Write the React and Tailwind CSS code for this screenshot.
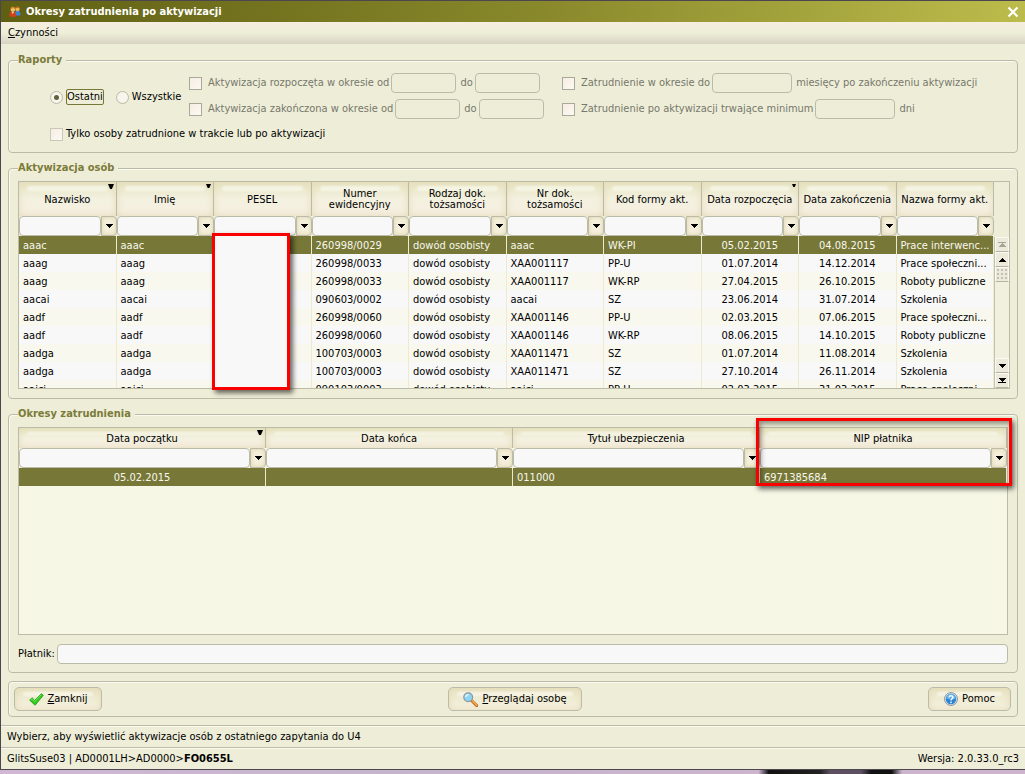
import React from 'react';
import clsx from 'clsx';

const PEOPLE_COLUMNS = [
  { title: 'Nazwisko', sort: 'w-1.5' },
  { title: 'Imię', sort: 'w-[5px]' },
  { title: 'PESEL' },
  { title: 'Numer ewidencyjny' },
  { title: 'Rodzaj dok. tożsamości' },
  { title: 'Nr dok. tożsamości' },
  { title: 'Kod formy akt.' },
  { title: 'Data rozpoczęcia', sort: 'w-1', center: true },
  { title: 'Data zakończenia', center: true },
  { title: 'Nazwa formy akt.' },
];

const PEOPLE = [
  ['aaac', 'aaac', '', '260998/0029', 'dowód osobisty', 'aaac', 'WK-PI', '05.02.2015', '04.08.2015', 'Prace interwenc...'],
  ['aaag', 'aaag', '', '260998/0033', 'dowód osobisty', 'XAA001117', 'PP-U', '01.07.2014', '14.12.2014', 'Prace społeczni...'],
  ['aaag', 'aaag', '', '260998/0033', 'dowód osobisty', 'XAA001117', 'WK-RP', '27.04.2015', '26.10.2015', 'Roboty publiczne'],
  ['aacai', 'aacai', '', '090603/0002', 'dowód osobisty', 'aacai', 'SZ', '23.06.2014', '31.07.2014', 'Szkolenia'],
  ['aadf', 'aadf', '', '260998/0060', 'dowód osobisty', 'XAA001146', 'PP-U', '02.03.2015', '07.06.2015', 'Prace społeczni...'],
  ['aadf', 'aadf', '', '260998/0060', 'dowód osobisty', 'XAA001146', 'WK-RP', '08.06.2015', '14.10.2015', 'Roboty publiczne'],
  ['aadga', 'aadga', '', '100703/0003', 'dowód osobisty', 'XAA011471', 'SZ', '01.07.2014', '11.08.2014', 'Szkolenia'],
  ['aadga', 'aadga', '', '100703/0003', 'dowód osobisty', 'XAA011471', 'SZ', '27.10.2014', '26.11.2014', 'Szkolenia'],
  ['aaici', 'aaici', '', '090103/0003', 'dowód osobisty', 'aaici', 'PP-U', '02.03.2015', '31.03.2015', 'Prace społeczni...'],
];

const PERIOD_COLUMNS = [
  { title: 'Data początku', sort: 'w-1.5', center: true },
  { title: 'Data końca', center: true },
  { title: 'Tytuł ubezpieczenia' },
  { title: 'NIP płatnika' },
];

const PERIODS = [['05.02.2015', '', '011000', '6971385684']];

const CHECKBOX = 'appearance-none size-[13px] shrink-0 border bg-linear-to-br from-[#f8ece2] to-[#fafaf4]';
const RADIO = 'appearance-none size-[13px] shrink-0 rounded-full border border-[#b9b9a6] bg-[#f7f5ec] grid place-items-center checked:before:size-[5px] checked:before:rounded-full checked:before:bg-[#62623a] checked:before:content-[""]';

function Triangle({ up, className }) {
  return (
    <svg className={className} width="8" height="4" viewBox="0 0 8 4" shapeRendering="crispEdges">
      <path d={up ? 'M0 4h8L4 0z' : 'M0 0h8L4 4z'} fill="currentColor" />
    </svg>
  );
}

function Group({ title, className, children }) {
  return (
    <fieldset className={clsx('min-w-0 rounded border border-[#bbbba8] pl-[9px] pt-1.5 shadow-[inset_1px_1px_0_#fafaf0]', className)}>
      <legend className="bg-[#eeeed8] pr-1 font-bold text-[#7b7b3a]">{title}</legend>
      {children}
    </fieldset>
  );
}

function DataGrid({ columns, rows, tall }) {
  return (
    <table className="w-full table-fixed border-separate border-spacing-0">
      <thead>
        <tr>
          {columns.map((col) => (
            <th
              key={col.title}
              className={clsx(
                'relative border-r border-[#bbbba8] bg-linear-to-b from-[#e6e4c0] via-[#f3f1e0] to-[#f6eee0] px-1 text-center font-normal leading-[11px] shadow-[inset_0_0_7px_#e4dab8]',
                tall ? 'h-[34px]' : 'h-5'
              )}
            >
              <span className={clsx('absolute inset-x-2 top-1 rounded bg-[#f8f7ea]/80 blur-[1px]', tall ? 'h-[5px]' : 'h-[3px]')} />
              <span className="relative">{col.title}</span>
              {col.sort && (
                <svg className={clsx('absolute right-0.5 top-0.5', col.sort)} viewBox="0 0 7 6">
                  <path d="M0 0h7L4.500 6h-2z" />
                </svg>
              )}
            </th>
          ))}
        </tr>
        <tr>
          {columns.map((col) => (
            <td key={col.title} className="h-5 p-0">
              <div className="flex h-5">
                <input
                  aria-label={`Filtr: ${col.title}`}
                  className="h-5 min-w-0 flex-1 rounded border border-[#bbbba8] bg-[#f8f8f8] px-1 outline-none"
                />
                <button
                  aria-label={`Wybierz: ${col.title}`}
                  className="grid h-5 w-4 place-items-center rounded-r border border-[#bbbba8] bg-[#f4efdc] shadow-[inset_0_0_4px_#ddd3a8]"
                >
                  <Triangle />
                </button>
              </div>
            </td>
          ))}
        </tr>
      </thead>
      <tbody>
        {rows.map((row, r) => (
          <tr
            key={r}
            className={clsx(r === 0 ? 'bg-[#777737] text-[#f8f8ee]' : r % 2 ? 'bg-[#f8f8f8]' : 'bg-[#f8f8ee]')}
          >
            {row.map((cell, c) => (
              <td
                key={c}
                className={clsx(
                  'h-[18px] whitespace-nowrap border-r border-[#ecebcf] pt-0.5 leading-4',
                  columns[c].center ? 'text-center' : 'pl-1'
                )}
              >
                {cell}
              </td>
            ))}
          </tr>
        ))}
      </tbody>
    </table>
  );
}

function ScrollButton({ label, disabled, children }) {
  return (
    <button
      aria-label={label}
      disabled={disabled}
      className="flex h-[15px] w-full flex-col items-center justify-center border border-[#fafaf2] border-b-[#b4b4a2] bg-[#eeeadb] disabled:text-[#a5a596]"
    >
      {children}
    </button>
  );
}

function ScrollBar() {
  return (
    <div className="flex w-[15px] shrink-0 flex-col pt-[55px]">
      <div className="flex flex-1 flex-col border-l border-[#c2c2b0] bg-[#f1f0de]">
        <ScrollButton label="Początek" disabled>
          <span className="h-px w-2 bg-current" />
          <Triangle up />
        </ScrollButton>
        <ScrollButton label="W górę"><Triangle up /></ScrollButton>
        <div className="h-[15px] border border-[#fafaf2] border-b-[#b4b4a2] bg-[#eeeadb] bg-[radial-gradient(#c2c2b0_1px,transparent_1px)] bg-[size:4px_4px]" />
        <div className="flex-1" />
        <ScrollButton label="W dół"><Triangle /></ScrollButton>
        <ScrollButton label="Koniec">
          <Triangle />
          <span className="h-px w-2 bg-current" />
        </ScrollButton>
      </div>
    </div>
  );
}

function RangeFilter({ label }) {
  return (
    <div className="flex items-center">
      <label className="flex items-center gap-1.5">
        <input type="checkbox" disabled className={clsx(CHECKBOX, 'border-[#a9a99a]')} />
        {label}
      </label>
      <input aria-label={`${label}: od`} disabled className="ml-0.5 h-5 w-[65px] rounded border border-[#bbbba8]" />
      <span className="ml-1">do</span>
      <input aria-label={`${label}: do`} disabled className="ml-0.5 h-5 w-[65px] rounded border border-[#bbbba8]" />
    </div>
  );
}

function NumberFilter({ label, unit }) {
  return (
    <div className="flex items-center">
      <label className="flex items-center gap-1.5">
        <input type="checkbox" disabled className={clsx(CHECKBOX, 'border-[#a9a99a]')} />
        {label}
      </label>
      <input aria-label={label} disabled className="ml-0.5 h-5 w-20 rounded border border-[#bbbba8]" />
      <span className="ml-1">{unit}</span>
    </div>
  );
}

function ActionButton({ className, children }) {
  return (
    <button
      className={clsx(
        'relative flex h-6 items-center justify-center gap-1 rounded-[5px] border border-[#bbbba8] bg-linear-to-b from-[#e8e5c4] to-[#f6f2e2] shadow-[inset_0_0_7px_#e4d8b4]',
        className
      )}
    >
      <span className="absolute inset-x-2 top-1 h-1 rounded bg-[#faf8ee]/80 blur-[1px]" />
      {children}
    </button>
  );
}

function PeopleIcon() {
  return (
    <svg width="12" height="11" viewBox="0 0 12 11">
      <path d="M5.500 9.500c0-3.500 1.200-5 3-5s3 1.500 3 5z" fill="#3d84d8" />
      <circle cx="8.500" cy="3" r="2.200" fill="#f0b458" />
      <path d="M6.400 2.400C6.600-.5 10.600-.5 10.700 2.800L9 1.600z" fill="#b4661a" />
      <path d="M.3 10.800c0-4 1-5.600 3.400-5.600s3.600 1.600 3.600 5.600z" fill="#d0401a" />
      <path d="M2.600 5.800l1.200 2.400 1.200-2.400z" fill="#f6d8a8" />
      <circle cx="3.900" cy="3.500" r="2.300" fill="#f5be68" />
      <path d="M1.600 3.300c-.2-3.600 4.700-3.600 4.700-.2L4 2z" fill="#d08428" />
    </svg>
  );
}

function CheckIcon() {
  return (
    <svg className="relative" width="15" height="13" viewBox="0 0 15 13">
      <path d="M.7 7.200 3 4.800l2.700 2.600L12.300.7l2 1.600-8.200 10z" fill="#2ecb1c" stroke="#1c9a12" strokeWidth=".8" strokeLinejoin="round" />
      <path d="M2 6.800l1-.9 2.700 2.700 6.500-6.700" fill="none" stroke="#86ee6c" strokeWidth=".8" />
    </svg>
  );
}

function SearchIcon() {
  return (
    <svg className="relative" width="15" height="15" viewBox="0 0 15 15">
      <path d="M9 9l4.800 4.600" stroke="#b56a24" strokeWidth="3" strokeLinecap="round" />
      <path d="M9.500 9.200l4.200 4" stroke="#f5a84c" strokeWidth="1.600" strokeLinecap="round" />
      <circle cx="5.200" cy="5.200" r="4.400" fill="#90d4f4" stroke="#8c98a0" strokeWidth="1.200" />
      <path d="M2.600 5c.2-1.600 1.400-2.500 3-2.400" stroke="#e8faff" strokeWidth="1.400" fill="none" />
    </svg>
  );
}

function HelpIcon() {
  return (
    <svg className="relative" width="14" height="14" viewBox="0 0 14 14">
      <circle cx="7" cy="7" r="6.500" fill="#d8dce0" stroke="#7c858e" strokeWidth=".8" />
      <circle cx="7" cy="7" r="5.200" fill="#2a84d4" />
      <path d="M2.200 6.500a4.800 4.800 0 0 1 9.600 0c-3 1.200-6.500 1.200-9.600 0z" fill="#62b2ee" />
      <path d="M5 5.400c.1-2.200 4-2.200 4 0C9 6.900 7 6.700 7 8.400" fill="none" stroke="#fff" strokeWidth="1.400" />
      <circle cx="7" cy="10.300" r=".9" fill="#fff" />
    </svg>
  );
}

export default function App() {
  return (
    <div className="flex min-h-screen flex-col bg-[#eeeed8] font-['DejaVu_Sans_Condensed','DejaVu_Sans',sans-serif] text-[11px] leading-[14px] text-black">
      <div className="flex flex-1 flex-col border-b border-l border-t border-[#4c4650]">
        <header className="flex h-[21px] items-center bg-linear-to-r from-[#606014] via-[#86862a] to-[#bcbc4c] pl-2 pr-1.5 text-white">
          <PeopleIcon />
          <h1 className="ml-[5px] flex-1 font-bold">Okresy zatrudnienia po aktywizacji</h1>
          <button aria-label="Zamknij okno">
            <svg width="12" height="12" viewBox="0 0 12 12">
              <path d="M1.500 1.500l9 9M10.500 1.500l-9 9" stroke="#fff" strokeWidth="2.200" />
            </svg>
          </button>
        </header>

        <nav className="flex h-[22px] items-center bg-linear-to-b from-[#f6eee0] via-[#eeeed8] to-[#d8d4c2] pl-[7px]">
          <button><u>C</u>zynności</button>
        </nav>

        <main className="flex flex-1 flex-col gap-2 px-[7px] pb-2 pt-[9px]">
          <Group title="Raporty" className="pb-[11px]">
            <div className="flex pl-8 text-[#77776c]">
              <div className="flex w-[139px] items-center gap-3 pt-0.5 text-black">
                <label className="flex items-center gap-[3px]">
                  <input type="radio" name="zakres" defaultChecked className={RADIO} />
                  <span className="rounded-xs border border-[#777737] leading-[14px]">Ostatni</span>
                </label>
                <label className="flex items-center gap-[3px]">
                  <input type="radio" name="zakres" className={RADIO} />
                  Wszystkie
                </label>
              </div>
              <div className="flex w-[373px] flex-col gap-1.5">
                <RangeFilter label="Aktywizacja rozpoczęta w okresie od" />
                <RangeFilter label="Aktywizacja zakończona w okresie od" />
              </div>
              <div className="flex flex-col gap-1.5">
                <NumberFilter label="Zatrudnienie w okresie do" unit="miesięcy po zakończeniu aktywizacji" />
                <NumberFilter label="Zatrudnienie po aktywizacji trwające minimum" unit="dni" />
              </div>
            </div>
            <label className="ml-8 mt-2 flex w-fit items-center gap-[3px]">
              <input type="checkbox" className={clsx(CHECKBOX, 'border-[#c8c8b8]')} />
              Tylko osoby zatrudnione w trakcie lub po aktywizacji
            </label>
          </Group>

          <Group title="Aktywizacja osób" className="pb-[9px] pr-[7px]">
            <div className="relative">
              <div className="flex h-[208px] overflow-hidden border border-[#bbbba8]">
                <div className="min-w-0 flex-1">
                  <DataGrid columns={PEOPLE_COLUMNS} rows={PEOPLE} tall />
                </div>
                <ScrollBar />
              </div>
              <div className="absolute left-[194px] top-[52px] h-[157px] w-[78px] border-3 border-[#fb0000] bg-[#f8f8f8] shadow-[3px_3px_5px_rgba(0,0,0,0.6)]" />
            </div>
          </Group>

          <Group title="Okresy zatrudnienia" className="flex-1 pb-2 pr-[9px]">
            <div className="relative">
              <div className="min-h-52 border border-[#bbbba8] bg-[#f7f7e6]">
                <DataGrid columns={PERIOD_COLUMNS} rows={PERIODS} />
              </div>
              <div className="absolute -right-1 -top-[9px] h-[68px] w-[256px] border-3 border-[#fb0000] shadow-[2px_3px_5px_rgba(0,0,0,0.6),inset_2px_3px_5px_rgba(0,0,0,0.4)]" />
            </div>
            <label className="mt-[9px] flex items-center gap-0.5">
              Płatnik:
              <input className="h-5 flex-1 rounded border border-[#bbbba8] bg-[#f8f8f8] px-1 outline-none" />
            </label>
          </Group>

          <div className="flex items-center justify-between rounded border border-[#bbbba8] py-[5px] pl-[5px] pr-1.5 shadow-[inset_1px_1px_0_#fafaf0]">
            <ActionButton className="w-[88px]">
              <CheckIcon />
              <span className="relative"><u>Z</u>amknij</span>
            </ActionButton>
            <ActionButton className="w-[134px]">
              <SearchIcon />
              <span className="relative"><u>P</u>rzeglądaj osobę</span>
            </ActionButton>
            <ActionButton className="w-[83px]">
              <HelpIcon />
              <span className="relative">Pomoc</span>
            </ActionButton>
          </div>
        </main>

        <div className="flex h-[22px] items-center border-t border-[#bbbba8] px-1.5 shadow-[inset_0_1px_0_#fafaf0]">
          Wybierz, aby wyświetlić aktywizacje osób z ostatniego zapytania do U4
        </div>
        <footer className="flex h-[22px] items-center justify-between border-t border-[#bbbba8] px-1.5 shadow-[inset_0_1px_0_#fafaf0]">
          <span>GlitsSuse03 | AD0001LH&gt;AD0000&gt;<b>FO0655L</b></span>
          <span>Wersja: 2.0.33.0_rc3</span>
        </footer>
      </div>
      <div className="h-1 bg-[linear-gradient(to_right,#d0b8d4,#c4b4cc_40%,#cbb4cc_74%,#111_75%,#222_80%,#5c5060_81%,#5c5060_84%,#111_85%,#111_87%,#cbb4cc_88%)]" />
    </div>
  );
}
